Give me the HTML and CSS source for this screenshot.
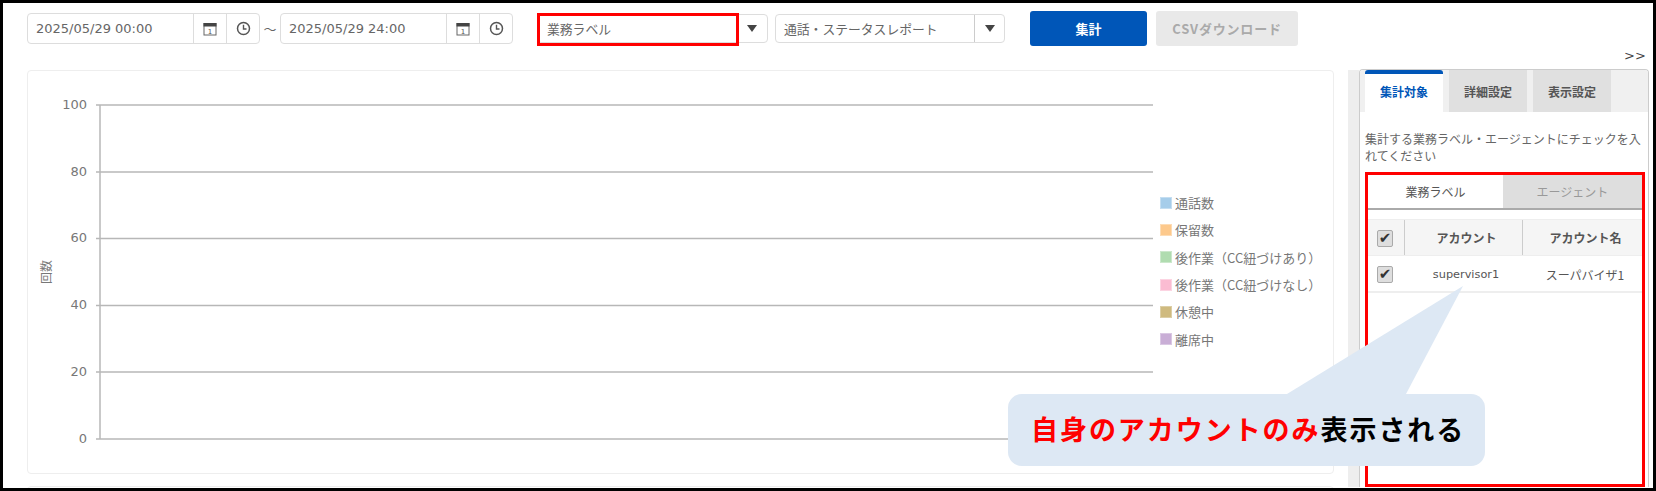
FILE: index.html
```html
<!DOCTYPE html>
<html lang="ja">
<head>
<meta charset="utf-8">
<title>集計</title>
<link rel="stylesheet" href="styles.css">
</head>
<body>
<div class="frame">
  <div class="toolbar">
    <div class="dategroup">
      <span class="datetext">2025/05/29 00:00</span>
      <span class="iconcell"><svg width="14" height="14" viewBox="0 0 14 14"><rect x="1" y="1.500" width="12" height="11.500" fill="#fff" stroke="#666"/><rect x="0.500" y="1" width="13" height="3.500" fill="#444"/><text x="7" y="11.500" class="caltext">1</text></svg></span>
      <span class="iconcell"><svg width="15" height="15" viewBox="0 0 15 15"><circle cx="7.500" cy="7.500" r="6" fill="none" stroke="#555" stroke-width="1.500"/><path d="M7.500 3.800V8H10.500" fill="none" stroke="#555" stroke-width="1.400"/></svg></span>
    </div>
    <span class="tilde">〜</span>
    <div class="dategroup">
      <span class="datetext">2025/05/29 24:00</span>
      <span class="iconcell"><svg width="14" height="14" viewBox="0 0 14 14"><rect x="1" y="1.500" width="12" height="11.500" fill="#fff" stroke="#666"/><rect x="0.500" y="1" width="13" height="3.500" fill="#444"/><text x="7" y="11.500" class="caltext">1</text></svg></span>
      <span class="iconcell"><svg width="15" height="15" viewBox="0 0 15 15"><circle cx="7.500" cy="7.500" r="6" fill="none" stroke="#555" stroke-width="1.500"/><path d="M7.500 3.800V8H10.500" fill="none" stroke="#555" stroke-width="1.400"/></svg></span>
    </div>
    <div class="select select-a">
      <span class="selecttext">業務ラベル</span>
      <span class="selectarrow"><i class="caret"></i></span>
      <span class="redbox"></span>
    </div>
    <div class="select select-b">
      <span class="selecttext">通話・ステータスレポート</span>
      <span class="selectarrow"><i class="caret"></i></span>
    </div>
    <button class="btn btn-primary">集計</button>
    <button class="btn btn-disabled">CSVダウンロード</button>
  </div>
  <div class="collapse">&gt;&gt;</div>
  <div class="main">
    <div class="leftcol">
      <section class="chartcard">
        <svg class="plot" width="1140" height="403" viewBox="0 0 1140 403">
          <g class="grid">
            <path d="M69 35H1126"/><path d="M69 102H1126"/><path d="M69 168.500H1126"/><path d="M69 235.500H1126"/><path d="M69 302H1126"/><path d="M69 369H1126"/>
            <path d="M73 35V369"/>
          </g>
          <g class="ticks">
            <text x="60" y="38.500">100</text><text x="60" y="105.500">80</text><text x="60" y="172">60</text><text x="60" y="239">40</text><text x="60" y="305.500">20</text><text x="60" y="372.500">0</text>
          </g>
          <text class="ytitle" transform="translate(24 202) rotate(-90)">回数</text>
        </svg>
        <ul class="legend">
          <li><i class="sw sw1"></i>通話数</li>
          <li><i class="sw sw2"></i>保留数</li>
          <li><i class="sw sw3"></i>後作業（CC紐づけあり）</li>
          <li><i class="sw sw4"></i>後作業（CC紐づけなし）</li>
          <li><i class="sw sw5"></i>休憩中</li>
          <li><i class="sw sw6"></i>離席中</li>
        </ul>
      </section>
      <div class="nextcard"></div>
    </div>
    <div class="splitter"><i class="dots"></i></div>
    <aside class="panel">
      <div class="tabs">
        <span class="tab tab-active">集計対象</span>
        <span class="tab">詳細設定</span>
        <span class="tab">表示設定</span>
      </div>
      <p class="desc">集計する業務ラベル・エージェントにチェックを入れてください</p>
      <div class="target">
        <div class="subtabs">
          <span class="subtab subtab-active">業務ラベル</span>
          <span class="subtab">エージェント</span>
        </div>
        <div class="thead row">
          <span class="c-check"><i class="check">✔</i></span>
          <span class="c-acc">アカウント</span>
          <span class="c-name">アカウント名</span>
        </div>
        <div class="tbody row">
          <span class="c-check"><i class="check">✔</i></span>
          <span class="c-acc">supervisor1</span>
          <span class="c-name">スーパバイザ1</span>
        </div>
      </div>
    </aside>
  </div>
  <svg class="tail" width="180" height="112" viewBox="0 0 180 112"><path d="M0 112L176 4L119 112Z" fill="#dde8f4"/></svg>
  <div class="bubble"><span class="red">自身のアカウントのみ</span>表示される</div>
</div>
</body>
</html>
```
FILE: styles.css
```css
* { box-sizing: border-box; }
html, body { margin: 0; padding: 0; }
body { width: 1656px; height: 491px; overflow: hidden; background: #fff; font-family: "Noto Sans CJK JP", "DejaVu Sans", sans-serif; color: #666; }
.frame { position: relative; width: 1656px; height: 491px; border: 3px solid #000; overflow: hidden; background: #fff; }

.toolbar { display: flex; align-items: center; height: 35px; margin-top: 8px; padding-left: 24px; }
.dategroup { display: flex; width: 233px; height: 31px; border: 1px solid #ddd; border-radius: 4px; background: #fff; }
.datetext { flex: 1; padding-left: 8px; font: 13px/29px "DejaVu Sans", sans-serif; color: #666; }
.iconcell { width: 33px; display: flex; align-items: center; justify-content: center; border-left: 1px solid #ddd; }
.caltext { font: 7px "DejaVu Sans", sans-serif; fill: #555; text-anchor: middle; }
.tilde { width: 20px; text-align: center; font-size: 13px; color: #666; }

.select { position: relative; display: flex; height: 29px; border: 1px solid #ddd; border-radius: 4px; background: #fff; }
.select-a { width: 231px; margin-left: 24px; }
.select-b { width: 230px; margin-left: 7px; }
.selecttext { flex: 1; padding-left: 8px; font-size: 12.800px; line-height: 27px; color: #666; }
.selectarrow { width: 30px; display: flex; align-items: center; justify-content: center; border-left: 1px solid #ccc; }
.select-a .selecttext { padding-left: 9px; }
.select-a .selectarrow { border-left: 0; }
.caret { width: 0; height: 0; border-left: 5px solid transparent; border-right: 5px solid transparent; border-top: 7px solid #444; }
.redbox { position: absolute; left: -1px; top: -2px; width: 202px; height: 33px; border: 3px solid #f00; pointer-events: none; }

.btn { height: 35px; border: 0; border-radius: 3px; font: bold 13px "Noto Sans CJK JP", sans-serif; padding: 0; }
.btn-primary { width: 117px; margin-left: 25px; background: #0056b8; color: #fff; }
.btn-disabled { width: 142px; margin-left: 9px; background: #e9e9e9; color: #aaa; letter-spacing: 0.800px; }

.collapse { position: absolute; top: 45px; left: 1621px; font: 13px "DejaVu Sans", sans-serif; color: #444; }

.main { display: flex; margin-top: 24px; padding-left: 24px; height: 417px; }
.leftcol { display: flex; flex-direction: column; gap: 12px; width: 1307px; flex: none; }
.chartcard { width: 1307px; height: 404px; flex: none; border: 1px solid #eee; border-radius: 4px; display: flex; }
.nextcard { flex: none; height: 40px; border: 1px solid #eee; border-radius: 4px; }
.plot { display: block; flex: none; margin-left: -1px; margin-top: -1px; }
.grid path { stroke: #b7b7b7; stroke-width: 1.5; fill: none; }
.ticks text { font: 13px "DejaVu Sans", sans-serif; fill: #777; text-anchor: end; }
.ytitle { font: 12px "Noto Sans CJK JP", sans-serif; fill: #777; text-anchor: middle; }

.legend { list-style: none; margin: 118px 0 0 -7px; padding: 0; display: flex; flex-direction: column; }
.legend li { display: flex; align-items: center; height: 27.3px; font-size: 13px; color: #777; white-space: nowrap; }
.sw { width: 12px; height: 12px; margin-right: 3px; border: 1px solid; }
.sw1 { background: #a6cdea; border-color: #c5def1; }
.sw2 { background: #fdc98c; border-color: #fddcb5; }
.sw3 { background: #b0dcb0; border-color: #cce8cc; }
.sw4 { background: #fbbcd2; border-color: #fcd4e2; }
.sw5 { background: #cfba7f; border-color: #dccea6; }
.sw6 { background: #c9aed6; border-color: #dac8e3; }

.splitter { position: relative; width: 11px; margin-left: 14px; background: #eee; height: 417px; flex: none; }
.dots { position: absolute; left: 4px; top: 393px; width: 5px; height: 2px; border-left: 2px solid #ccc; border-right: 2px solid #ccc; }
.panel { width: 290px; height: 418px; flex: none; margin-top: -1px; border: 1px solid #ccc; border-bottom: 0; border-radius: 4px 4px 0 0; background: #fff; overflow: hidden; }
.tabs { display: flex; height: 42px; background: #f0f0f0; padding-left: 5px; gap: 6px; }
.tab { width: 78px; height: 42px; background: #e0e0e0; font-size: 12px; font-weight: 700; line-height: 43px; text-align: center; color: #555; }
.tab-active { background: #fff; color: #0056b8; border-top: 4px solid #0056b8; border-radius: 3px 3px 0 0; line-height: 36px; }
.desc { margin: 18px 0 0 5px; width: 282px; font-size: 12px; line-height: 17px; color: #666; }
.target { margin: 8px 0 0 5px; width: 280px; height: 315px; border: 3px solid #f00; }
.subtabs { display: flex; height: 35px; border-bottom: 2px solid #aaa; }
.subtab { flex: 1; font-size: 12px; line-height: 33px; text-align: center; color: #999; background: #dedede; }
.subtab-active { flex: none; width: 135px; background: #fff; color: #555; }
.row { display: flex; align-items: center; height: 37px; font-size: 12px; text-align: center; color: #555; }
.thead { margin-top: 9px; background: #f5f5f5; font-weight: 700; border-top: 1px solid #eee; border-bottom: 1px solid #eee; }
.tbody { border-bottom: 2px solid #eee; }
.tbody .c-acc { font-family: "DejaVu Sans", sans-serif; font-size: 11.300px; }
.c-check { width: 36px; height: 100%; display: flex; align-items: center; padding: 2px 0 0 9px; }
.c-acc { width: 118px; padding-left: 6px; line-height: 35px; height: 100%; }
.tbody .c-acc, .tbody .c-name { line-height: 37px; }
.c-name { flex: 1; padding-left: 6px; line-height: 35px; height: 100%; }
.thead .c-acc, .thead .c-name { border-left: 1px solid #ccc; }
.check { display: flex; align-items: center; justify-content: center; width: 16px; height: 17px; background: #dedede; border: 1px solid #aaa; border-radius: 2px; font: normal 15px/1 "DejaVu Sans", sans-serif; color: #333; }

.tail { position: absolute; left: 1284px; top: 279px; overflow: visible; }
.bubble { position: absolute; left: 1005px; top: 391px; width: 477px; height: 72px; padding-left: 23px; border-radius: 14px; background: #dde8f4; font-size: 27px; font-weight: 700; letter-spacing: 1.950px; line-height: 70px; color: #000; white-space: nowrap; }
.red { color: #f00; }
```
